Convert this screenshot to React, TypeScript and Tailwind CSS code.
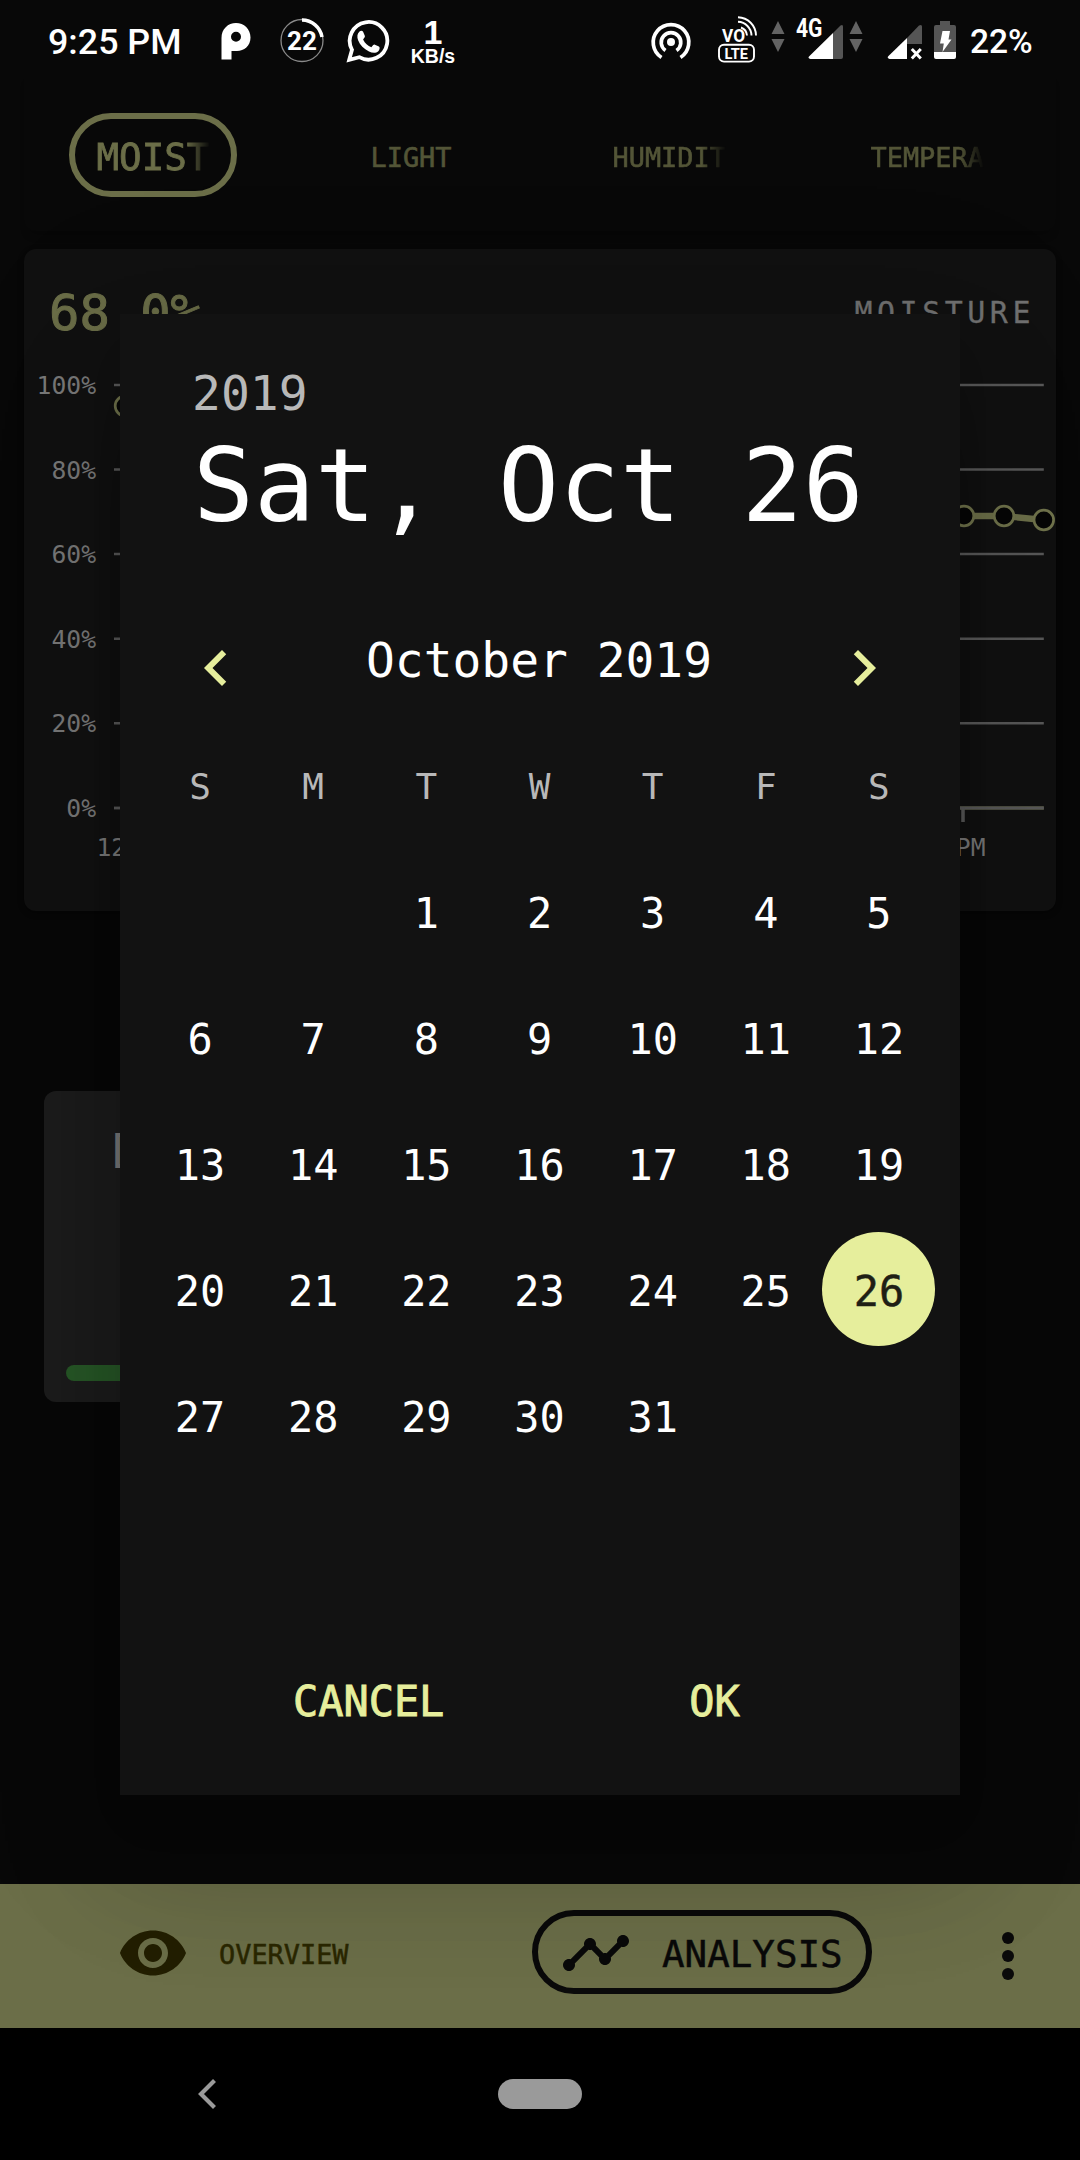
import React from "react";

const MONO = "font-['DejaVu_Sans_Mono','Liberation_Mono',monospace]";
const SANS = "font-[Roboto,sans-serif]";

function PocketIcon() {
  return (
    <svg className="ml-[42px] h-[72px] w-[30px]" viewBox="221 0 30 72" fill="#fff">
      <path
        fillRule="evenodd"
        d="M221.500 59.500V38C221.500 29 228 23 236 23s14.500 6 14.500 14.500S244 51 237 51h-5.500v8.500zM236 31.800a5 5 0 1 0 0 10 5 5 0 0 0 0-10z"
      />
    </svg>
  );
}

function CounterIcon() {
  return (
    <svg className="ml-[28px] h-[72px] w-[46px]" viewBox="279 0 46 72">
      <circle cx="302" cy="40.500" r="21" fill="none" stroke="#8a8a8a" strokeWidth="1.300" />
      <path d="M302 20A20.500 20.500 0 0 1 322 37" fill="none" stroke="#fff" strokeWidth="3.500" />
      <text x="302" y="50" textAnchor="middle" fill="#fff" className="font-[Roboto,sans-serif] text-[26px] font-bold">
        22
      </text>
    </svg>
  );
}

function WhatsAppIcon() {
  return (
    <svg className="ml-[21px] h-[72px] w-[44px]" viewBox="346 0 44 72">
      <path
        d="M349.200 59.800l2.800-10a18.800 18.800 0 1 1 7.300 7.400z"
        fill="none"
        stroke="#fff"
        strokeWidth="3.800"
      />
      <path
        d="M359.500 31.500c1.200-1.200 3-1 3.600.3l1.700 4c.3.900 0 1.700-1.700 3.600 1.900 4 4.600 6.400 8.300 7.800 1.900-2.400 2.500-2.900 3.500-2.500l4 1.900c1.200.6.900 3.300-.6 4.600-2.500 2.200-6.200 1.700-9.300.2-5.200-2.400-9-6.500-10.900-11.200-1.300-3.500-.9-6.500 1.400-8.700z"
        fill="#fff"
      />
    </svg>
  );
}

function HotspotIcon() {
  return (
    <svg className="h-[72px] w-[42px]" viewBox="650 0 42 72" fill="none" stroke="#fff" strokeWidth="3.700">
      <path d="M661.500 57.500A17.800 17.800 0 1 1 680.500 57.500" />
      <path d="M665.500 50.500A9.800 9.800 0 1 1 676.500 50.500" />
      <circle cx="671" cy="42" r="4" fill="#fff" stroke="none" />
    </svg>
  );
}

function VolteIcon() {
  return (
    <svg className="ml-[25px] h-[72px] w-[42px]" viewBox="717 0 42 72">
      <text x="722" y="41.500" fill="#fff" textLength="23" lengthAdjust="spacingAndGlyphs" className="font-[Roboto,sans-serif] text-[18.500px] font-bold">
        VO
      </text>
      <g fill="none" stroke="#fff" strokeWidth="1.900">
        <path d="M738 17.200A18.500 18.500 0 0 1 756 35.500" />
        <path d="M738 21.800A14 14 0 0 1 751.500 35.500" />
        <path d="M741 27.500A9.300 9.300 0 0 1 747 35.500" />
        <rect x="719" y="44.800" width="35" height="16.800" rx="5" />
      </g>
      <text x="724.500" y="58.500" fill="#fff" textLength="23.500" lengthAdjust="spacingAndGlyphs" className="font-[Roboto,sans-serif] text-[15px] font-bold">
        LTE
      </text>
    </svg>
  );
}

function DataArrows({ className }: { className: string }) {
  return (
    <svg className={className} viewBox="0 0 14 72" fill="#636363">
      <path d="M7 21l6.500 13H.5zM.5 39h13L7 52z" />
    </svg>
  );
}

function SignalFourG() {
  return (
    <svg className="ml-[10px] h-[72px] w-[49px]" viewBox="795 0 49 72">
      <path d="M833 33l7.500-7.500q2.500-1.500 2.500 1V57q0 2-2 2h-8z" fill="#555" />
      <path d="M833 33v26h-22.500q-3.500-1-1-3z" fill="#fff" />
      <text x="796" y="37.300" fill="#fff" textLength="26.500" lengthAdjust="spacingAndGlyphs" className="font-[Roboto,sans-serif] text-[25px] font-bold">
        4G
      </text>
    </svg>
  );
}

function SignalOff() {
  return (
    <svg className="ml-[24px] h-[72px] w-[36px]" viewBox="887 0 36 72">
      <path d="M907 38l12-12.500q3-1.500 3 1V44h-15z" fill="#555" />
      <path d="M907 38v21h-17.500q-3-1-1-3z" fill="#fff" />
      <path d="M911.800 49l9 9.500M920.800 49l-9 9.500" stroke="#fff" strokeWidth="3" />
    </svg>
  );
}

function BatteryIcon() {
  return (
    <svg className="ml-[11px] h-[72px] w-[22px]" viewBox="934 0 22 72">
      <path d="M940 21h10v4h4q2 0 2 2v25h-22V27q0-2 2-2h4z" fill="#555" />
      <path d="M934 52h22v5q0 2-2 2h-18q-2 0-2-2z" fill="#fff" />
      <path d="M942.500 31h7.500l-1.500 8.500h3L942.500 52l1.300-8.500h-3.800z" fill="#fff" />
    </svg>
  );
}

function StatusBar() {
  return (
    <header className={`${SANS} flex h-[72px] items-start text-white`}>
      <span className="ml-[48px] w-[131px] whitespace-nowrap pt-[20px] text-[35.800px] font-medium leading-[45px]">
        9:25 PM
      </span>
      <PocketIcon />
      <CounterIcon />
      <WhatsAppIcon />
      <div className="ml-[20px] flex w-[46px] flex-col items-center font-['Liberation_Sans',sans-serif] font-bold">
        <span className="mt-[14px] text-[34px] leading-[36px]">1</span>
        <span className="text-[19.500px] leading-[12px]">KB/s</span>
      </div>
      <div className="ml-auto flex w-[430px] items-start">
        <HotspotIcon />
        <VolteIcon />
        <DataArrows className="ml-[12px] h-[72px] w-[14px]" />
        <SignalFourG />
        <DataArrows className="ml-[5px] h-[72px] w-[14px]" />
        <SignalOff />
        <BatteryIcon />
        <span className="ml-[14px] whitespace-nowrap pt-[19px] text-[33.500px] font-medium leading-[45px]">22%</span>
      </div>
    </header>
  );
}

const FADE = "[mask-image:linear-gradient(to_right,#000_78%,transparent)]";

function Tabs() {
  return (
    <nav className={`${MONO} mx-[24px] grid h-[159px] grid-cols-4 rounded-b-[12px] text-[26.900px] text-[#535537] shadow-[0_8px_10px_-6px_rgba(0,0,0,0.4)]`}>
      <div className="flex justify-center pt-[41px]">
        <div className="flex h-[84px] w-[168px] items-center justify-center rounded-full border-[6px] border-[#6b6e48]">
          <span className={`w-[113px] overflow-hidden whitespace-nowrap pt-[3px] text-[37.500px] leading-[48px] text-[#6b6e48] [-webkit-text-stroke:0.8px] ${FADE}`}>
            MOIST
          </span>
        </div>
      </div>
      <span className="pt-[67px] text-center leading-[38px] [-webkit-text-stroke:0.6px]">LIGHT</span>
      <span className={`mx-auto w-[113px] overflow-hidden whitespace-nowrap pt-[67px] leading-[38px] [-webkit-text-stroke:0.6px] ${FADE}`}>
        HUMIDIT
      </span>
      <span className={`mx-auto w-[113px] overflow-hidden whitespace-nowrap pt-[67px] leading-[38px] [-webkit-text-stroke:0.6px] ${FADE}`}>
        TEMPERA
      </span>
    </nav>
  );
}

const GRID = [
  { label: "100%", y: 385 },
  { label: "80%", y: 469.500 },
  { label: "60%", y: 554 },
  { label: "40%", y: 638.700 },
  { label: "20%", y: 723.300 },
  { label: "0%", y: 808 },
];

const POINTS = [
  { x: 964, y: 516 },
  { x: 1004, y: 516 },
  { x: 1043.800, y: 520 },
];

function MoistureCard() {
  return (
    <section className={`${MONO} mx-[24px] mt-[18px] h-[662px] rounded-[12px] bg-[#111] shadow-[0_2px_6px_rgba(0,0,0,0.3)]`}>
      <div className="flex h-[100px] items-start justify-between pl-[25px] pr-[21px]">
        <span className="pt-[34px] text-[50.500px] leading-[60px] text-[#6b6e48] [-webkit-text-stroke:1px]">68.0%</span>
        <span className="pt-[44px] text-[30px] leading-[40px] tracking-[4.500px] text-[#727272] [-webkit-text-stroke:0.3px]">MOISTURE</span>
      </div>
      <svg className="block h-[562px] w-[1032px]" viewBox="24 349 1032 562">
        {GRID.map((g) => (
          <g key={g.label}>
            <text x="96" y={g.y + 9} textAnchor="end" fill="#7a7a7a" className="text-[24.700px]">
              {g.label}
            </text>
            <path d={`M114 ${g.y}H1043.800`} stroke="#5a5a5a" strokeWidth="2.600" />
          </g>
        ))}
        <path d="M125 808H1043.800" stroke="#4b4c3c" strokeWidth="4" />
        <path d="M114 808H1043.800" stroke="#5a5a5a" strokeWidth="2.600" />
        <path d="M963 808v14" stroke="#5a5a5a" strokeWidth="3.500" />
        <text x="96.500" y="856" fill="#7a7a7a" className="text-[24.700px]">12</text>
        <text x="985.500" y="856" textAnchor="end" fill="#7a7a7a" className="text-[24.700px]">9PM</text>
        <path d="M125 406L300 470L900 516L964 516L1004 516L1043.800 520" fill="none" stroke="#6f724b" strokeWidth="6.400" />
        <circle cx="125" cy="406" r="9.800" fill="#070707" stroke="#6f724b" strokeWidth="2.700" />
        {POINTS.map((p) => (
          <circle key={p.x} cx={p.x} cy={p.y} r="9.800" fill="#070707" stroke="#72754d" strokeWidth="2.700" />
        ))}
      </svg>
    </section>
  );
}

function StatCard() {
  return (
    <section className={`${MONO} ml-[44px] mt-[180px] h-[311px] w-[480px] rounded-[12px] bg-[#1c1c1c] px-[22px]`}>
      <p className="h-[274px] pl-[46px] pt-[32px] text-[48px] leading-[56px] text-[#7a7a7a]">D</p>
      <div className="h-[16px] rounded-full bg-[#275827]" />
    </section>
  );
}

function BottomBar() {
  return (
    <nav className={`${MONO} mt-auto flex h-[144px] shrink-0 items-start bg-[#6b6e48]`}>
      <svg className="ml-[117px] mt-[33px] h-[72px] w-[72px]" viewBox="0 0 24 24" fill="#231f00">
        <path d="M12 4.500C7 4.500 2.730 7.610 1 12c1.730 4.390 6 7.500 11 7.500s9.270-3.110 11-7.500c-1.730-4.390-6-7.500-11-7.500zM12 17c-2.760 0-5-2.240-5-5s2.240-5 5-5 5 2.240 5 5-2.240 5-5 5zm0-8c-1.660 0-3 1.340-3 3s1.340 3 3 3 3-1.340 3-3-1.340-3-3-3z" />
      </svg>
      <span className="ml-[30px] w-[131px] pt-[51px] text-[26.900px] leading-[40px] text-[#2a2700] [-webkit-text-stroke:0.5px]">OVERVIEW</span>
      <div className="ml-[182px] mt-[26px] flex h-[84px] w-[340px] items-start rounded-full border-[6px] border-[#0a0a0a] text-[#0a0a0a]">
        <svg className="ml-[22px] mt-[1px] h-[72px] w-[72px]" viewBox="0 0 24 24" fill="currentColor">
          <path d="M23 8c0 1.100-.9 2-2 2-.18 0-.35-.02-.51-.07l-3.560 3.550c.05.16.07.34.07.52 0 1.100-.9 2-2 2s-2-.9-2-2c0-.18.02-.36.07-.52l-2.550-2.550c-.16.05-.34.07-.52.07s-.36-.02-.52-.07l-4.550 4.560c.05.16.07.33.07.51 0 1.100-.9 2-2 2s-2-.9-2-2 .9-2 2-2c.18 0 .35.02.51.07l4.560-4.550C8.020 9.360 8 9.180 8 9c0-1.100.9-2 2-2s2 .9 2 2c0 .18-.02.36-.07.52l2.550 2.550c.16-.05.34-.07.52-.07s.36.02.52.07l3.550-3.560C19.020 8.350 19 8.180 19 8c0-1.100.9-2 2-2s2 .9 2 2z" />
        </svg>
        <span className="ml-[30px] pt-[14px] text-[37.500px] leading-[48px] [-webkit-text-stroke:0.5px]">ANALYSIS</span>
      </div>
      <svg className="ml-[100px] mt-[36px] h-[72px] w-[72px]" viewBox="0 0 24 24" fill="#0a0a0a">
        <circle cx="12" cy="6" r="2" />
        <circle cx="12" cy="12" r="2" />
        <circle cx="12" cy="18" r="2" />
      </svg>
    </nav>
  );
}

function SystemNav() {
  return (
    <footer className="flex h-[132px] shrink-0 items-center bg-black">
      <svg className="ml-[198px] h-[30px] w-[18px]" viewBox="0 0 18 30" fill="none" stroke="#9a9a9a" strokeWidth="4.200">
        <path d="M16.500 1.500L3 15l13.500 13.500" />
      </svg>
      <div className="ml-[282px] h-[30px] w-[84px] rounded-full bg-[#9a9a9a]" />
    </footer>
  );
}

const WEEKDAYS = ["S", "M", "T", "W", "T", "F", "S"];
const DAYS = Array.from({ length: 31 }, (_, i) => i + 1);
const SELECTED = 26;

function DatePicker() {
  return (
    <div className="absolute inset-0 flex justify-center pt-[314px]">
      <div
        className={`${MONO} flex h-[1481px] w-[840px] flex-col bg-[#121212] pt-[50px] text-white shadow-[0_33px_45px_-21px_rgba(0,0,0,0.2),0_72px_114px_9px_rgba(0,0,0,0.14),0_27px_138px_24px_rgba(0,0,0,0.12)]`}
      >
        <p className="pl-[72px] text-[48px] leading-[58px] text-[#b8b8b8]">2019</p>
        <h1 className="mt-[4px] whitespace-nowrap pl-[73px] text-[101.300px] leading-[120px]">Sat, Oct 26</h1>
        <div className="mt-[86px] flex h-[72px] items-center justify-between px-[60px]">
          <svg className="h-[72px] w-[72px]" viewBox="0 0 24 24" fill="#e6ee9c">
            <path d="M15.410 7.410L14 6l-6 6 6 6 1.410-1.410L10.830 12z" />
          </svg>
          <span className="pb-[14px] pr-[2px] text-[47.900px] leading-[58px]">October 2019</span>
          <svg className="h-[72px] w-[72px]" viewBox="0 0 24 24" fill="#e6ee9c">
            <path d="M10 6L8.590 7.410 13.170 12l-4.580 4.590L10 18l6-6z" />
          </svg>
        </div>
        <div className="mt-[20px] grid auto-rows-[126px] grid-cols-7 pl-[23.500px] pr-[24.500px] text-[41.900px] leading-[50px]">
          {WEEKDAYS.map((d, i) => (
            <span key={i} className="flex items-center justify-center text-[36px] text-[#b8b8b8]">
              {d}
            </span>
          ))}
          <span className="col-span-2" />
          {DAYS.map((d) =>
            d === SELECTED ? (
              <span key={d} className="flex items-center justify-center">
                <span className="mb-[4px] flex h-[114px] w-[113px] items-center justify-center rounded-full bg-[#e6ee9c] pt-[6px] text-[#1f1f15] [-webkit-text-stroke:0.5px]">
                  {d}
                </span>
              </span>
            ) : (
              <span key={d} className="flex items-center justify-center pt-[2px]">
                {d}
              </span>
            ),
          )}
        </div>
        <div className="mt-[179px] flex pl-[173px] text-[41.900px] leading-[86px] text-[#e6ee9c] [-webkit-text-stroke:0.9px]">
          <button>CANCEL</button>
          <button className="ml-[245px]">OK</button>
        </div>
      </div>
    </div>
  );
}

export default function App() {
  return (
    <div className="relative flex h-[2160px] w-[1080px] flex-col overflow-hidden bg-[#080808]">
      <StatusBar />
      <Tabs />
      <MoistureCard />
      <StatCard />
      <BottomBar />
      <SystemNav />
      <DatePicker />
    </div>
  );
}
